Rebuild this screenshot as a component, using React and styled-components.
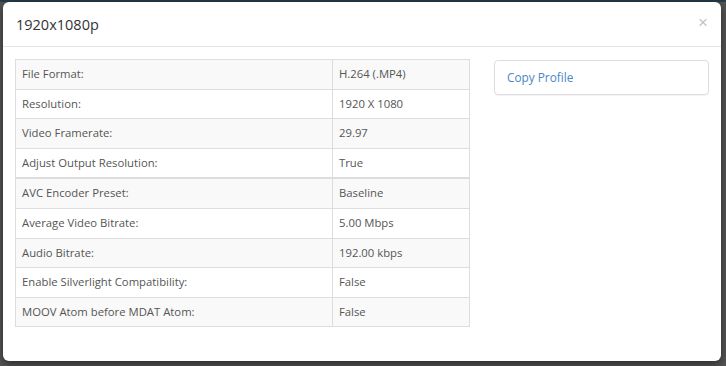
import React from 'react'
import styled, { createGlobalStyle } from 'styled-components'

const GlobalStyle = createGlobalStyle`
  html, body {
    margin: 0;
    padding: 0;
    background: #4f4f4f;
  }
  body {
    font-family: "Open Sans", "Liberation Sans", sans-serif;
    -webkit-font-smoothing: antialiased;
  }
`;

const Backdrop = styled.div`
  width: 726px;
  height: 366px;
  overflow: hidden;
  background: #545454;
  display: flex;
  flex-direction: column;
  align-items: flex-start;
`;

const NavStrip = styled.div`
  height: 2px;
  width: 100%;
  background: #263a48;
  flex-shrink: 0;
`;

const Modal = styled.div`
  margin-left: 3px;
  width: 718px;
  height: 359px;
  background: #fff;
  border-radius: 6px;
  box-shadow: 0 3px 9px rgba(0, 0, 0, 0.5);
  display: flex;
  flex-direction: column;
  flex-shrink: 0;
  box-sizing: border-box;
`;

const Header = styled.div`
  height: 45px;
  border-bottom: 1px solid #e5e5e5;
  display: flex;
  align-items: center;
  justify-content: space-between;
  padding: 0 13px 0 13px;
  box-sizing: border-box;
`;

const Title = styled.h4`
  margin: 0;
  font-size: 14.5px;
  font-weight: 400;
  color: #333;
`;

const Close = styled.button`
  border: none;
  background: none;
  padding: 0;
  font-size: 17px;
  line-height: 1;
  color: #c4c4c4;
  font-family: "Liberation Sans", sans-serif;
  cursor: pointer;
  margin-top: -4px;
`;

const Body = styled.div`
  padding: 12px 12px 0 12px;
  display: grid;
  grid-template-columns: 455px 1fr;
  column-gap: 24px;
  align-items: start;
`;

const Table = styled.table`
  width: 100%;
  border-collapse: collapse;
  border: 1px solid #ddd;
  font-size: 11.3px;
  color: #555;

  tbody + tbody {
    border-top: 2px solid #ddd;
  }
  tbody tr:nth-child(odd) {
    background: #f9f9f9;
  }
`;

const Cell = styled.td`
  padding: 7px 6px;
  line-height: 14.6px;
  border: 1px solid #ddd;
  width: ${({ $w }) => $w || 'auto'};
`;

const Panel = styled.div`
  margin-top: 1px;
  border: 1px solid #ddd;
  border-radius: 4px;
  box-shadow: 0 1px 1px rgba(0, 0, 0, 0.05);
  padding: 9px 12px 9px 12px;
`;

const PanelLink = styled.a`
  display: block;
  font-size: 11.8px;
  color: #4a86c7;
  text-decoration: none;
  line-height: 15px;
`;

const Behind = styled.div`
  margin: 2px 0 0 4px;
  font-size: 16px;
  color: #2a2a2a;
  white-space: nowrap;
`;

const groups = [
  [
    ['File Format:', 'H.264 (.MP4)'],
    ['Resolution:', '1920 X 1080'],
    ['Video Framerate:', '29.97'],
    ['Adjust Output Resolution:', 'True'],
  ],
  [
    ['AVC Encoder Preset:', 'Baseline'],
    ['Average Video Bitrate:', '5.00 Mbps'],
    ['Audio Bitrate:', '192.00 kbps'],
    ['Enable Silverlight Compatibility:', 'False'],
    ['MOOV Atom before MDAT Atom:', 'False'],
  ],
]

const App = () => {
  return (
    <Backdrop>
      <GlobalStyle />
      <NavStrip />
      <Modal>
        <Header>
          <Title>1920x1080p</Title>
          <Close aria-label="Close">×</Close>
        </Header>
        <Body>
          <Table>
            {groups.map((rows, gi) => (
              <tbody key={gi}>
                {rows.map(([k, v]) => (
                  <tr key={k}>
                    <Cell $w="304px">{k}</Cell>
                    <Cell>{v}</Cell>
                  </tr>
                ))}
              </tbody>
            ))}
          </Table>
          <Panel>
            <PanelLink href="#">Copy Profile</PanelLink>
          </Panel>
        </Body>
      </Modal>
      <Behind>19-1080P 25Mb VBR</Behind>
    </Backdrop>
  )
}

export default App
